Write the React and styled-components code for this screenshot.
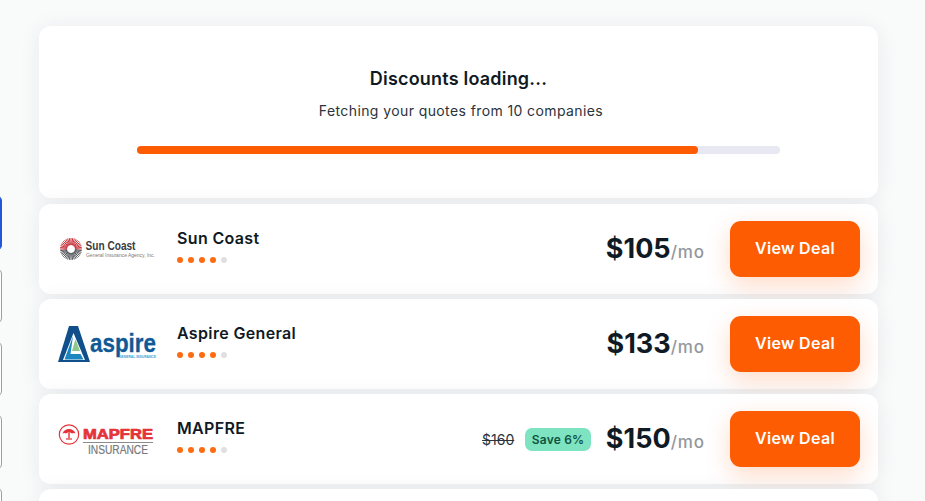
import React from "react";
import styled, { createGlobalStyle } from "styled-components";

const GlobalStyle = createGlobalStyle`
  html, body {
    margin: 0;
    height: 100%;
    overflow: hidden;
    background: #f9fafa;
    font-family: Inter, "Liberation Sans", sans-serif;
    color: #0f1a24;
  }
`;

const Page = styled.div`
  display: flex;
  height: 501px;
  overflow: hidden;
`;

const Rail = styled.div`
  width: 2px;
  flex: none;
  padding-top: 125px;
  display: flex;
  flex-direction: column;
  overflow: hidden;
`;

const RailRule = styled.div`
  width: 2px;
  height: 1px;
  background: #c9cbce;
  margin-bottom: 70px;
`;

const RailTile = styled.div`
  width: 40px;
  height: 56px;
  flex: none;
  box-sizing: border-box;
  margin-left: -38px;
  margin-bottom: 17px;
  border-radius: 6px;
  border: 1px solid ${(p) => (p.$active ? "#2456d6" : "#9b9ea2")};
  background: ${(p) => (p.$active ? "#2456d6" : "#fff")};
`;

const Main = styled.div`
  width: 839px;
  margin: 26px 0 0 37px;
  display: flex;
  flex-direction: column;
  gap: 5px;
`;

const LoadingCard = styled.section`
  height: 172px;
  flex: none;
  margin-bottom: 1px;
  box-sizing: border-box;
  padding-top: 42px;
  background: #fff;
  border-radius: 12px;
  box-shadow: 0 2px 22px rgba(30, 45, 70, 0.07);
  display: flex;
  flex-direction: column;
  align-items: center;
`;

const Title = styled.h2`
  margin: 0;
  font-size: 18px;
  line-height: 22px;
  font-weight: 600;
  letter-spacing: 0.2px;
`;

const Subtitle = styled.p`
  margin: 11px 0 0 5px;
  font-size: 14px;
  line-height: 20px;
  color: #2b333b;
  letter-spacing: 0.4px;
`;

const Track = styled.div`
  width: 643px;
  height: 8px;
  margin-top: 25px;
  border-radius: 4px;
  background: #e8e8f3;
`;

const Fill = styled.div`
  height: 100%;
  border-radius: 4px;
  background: #fd5c02;
`;

const Card = styled.article`
  height: 90px;
  flex: none;
  box-sizing: border-box;
  padding: 0 18px 0 19px;
  background: #fff;
  border-radius: 12px;
  box-shadow: 0 2px 22px rgba(30, 45, 70, 0.07);
  display: flex;
  align-items: center;
`;

const LogoSlot = styled.div`
  width: 119px;
  flex: none;
  display: flex;
  align-items: center;
`;

const Info = styled.div`
  display: flex;
  flex-direction: column;
  gap: 9px;
  margin-top: -8px;
`;

const Name = styled.div`
  font-size: 16px;
  line-height: 20px;
  font-weight: 600;
  letter-spacing: 0.35px;
`;

const Dots = styled.div`
  display: flex;
  gap: 5px;
`;

const Dot = styled.span`
  width: 6px;
  height: 6px;
  border-radius: 50%;
  background: ${(p) => (p.$on ? "#fd6c12" : "#dfe0e2")};
`;

const Pricing = styled.div`
  margin-left: auto;
  display: flex;
  align-items: center;
`;

const OldPrice = styled.s`
  font-size: 14px;
  color: #2b333b;
  margin-right: 11px;
`;

const SaveBadge = styled.span`
  height: 23px;
  padding: 0 6.5px;
  margin-right: 15px;
  display: flex;
  align-items: center;
  border-radius: 7px;
  background: #7de3c0;
  color: #125342;
  font-size: 12px;
  font-weight: 600;
  letter-spacing: 0.2px;
`;

const Price = styled.span`
  font-size: 27px;
  line-height: 32px;
  font-weight: 700;
`;

const Per = styled.span`
  font-size: 17px;
  font-weight: 500;
  color: #94979d;
  margin: 6px 0 0;
  letter-spacing: 0.9px;
`;

const DealButton = styled.button`
  width: 130px;
  height: 56px;
  flex: none;
  margin-left: 25px;
  padding: 0 0 2px;
  border: 0;
  border-radius: 11px;
  background: #fd5c02;
  color: #fff;
  font: 600 16px Inter, "Liberation Sans", sans-serif;
  letter-spacing: 0.3px;
  box-shadow: 0 8px 24px rgba(253, 92, 2, 0.22);
`;

const SunCoastLogo = () => {
  const spokes = [];
  for (let i = 0; i < 40; i++) {
    const a = (i / 40) * Math.PI * 2;
    const top = Math.sin(a) < 0.1;
    spokes.push(
      <line
        key={i}
        x1={13 + Math.cos(a) * 4}
        y1={13 + Math.sin(a) * 4}
        x2={13 + Math.cos(a) * 11}
        y2={13 + Math.sin(a) * 11}
        stroke={top ? "#c8323c" : "#55585c"}
        strokeWidth="1"
      />
    );
  }
  return (
    <svg width="100" height="26" viewBox="0 0 100 26">
      {spokes}
      <text x="27.500" y="14" fontFamily="Liberation Sans Narrow, Liberation Sans" fontSize="13" fontWeight="700" fill="#3a3c3f" textLength="50" lengthAdjust="spacingAndGlyphs">
        Sun Coast
      </text>
      <text x="28" y="20.500" fontFamily="Liberation Sans" fontSize="5" fill="#77797c" textLength="69" lengthAdjust="spacingAndGlyphs">
        General Insurance Agency, Inc.
      </text>
    </svg>
  );
};

const AspireLogo = () => (
  <svg width="108" height="37" viewBox="0 0 108 37">
    <path d="M11 0h9l12 36H0z" fill="#114f8a" />
    <path d="M15.500 7 27 34H5z" fill="#fff" />
    <path d="M15 10 6.500 33.500h19L22.500 28h-10z" fill="#1b86bf" />
    <path d="M17.500 13 22 25h-8z" fill="#8fc78a" />
    <text x="32" y="26" fontFamily="Liberation Sans" fontSize="26" fontWeight="700" fill="#0f5a96" stroke="#0f5a96" strokeWidth="0.300" textLength="66" lengthAdjust="spacingAndGlyphs">
      aspire
    </text>
    <text x="61" y="32" fontFamily="Liberation Sans" fontSize="3.500" fontWeight="700" fill="#3f9fd0" textLength="37" lengthAdjust="spacingAndGlyphs">
      GENERAL INSURANCE
    </text>
  </svg>
);

const MapfreLogo = () => (
  <svg width="100" height="31" viewBox="0 0 100 31">
    <circle cx="11" cy="10.500" r="9.700" fill="none" stroke="#e5333a" strokeWidth="1.200" />
    <path d="M4.500 9.500C5.500 6.500 8 5 11 5s5.500 1.500 6.500 4.500c-1.200-.8-2.600-.8-3.600 0-.8-.7-1.600-.9-2.900-.9s-2.100.2-2.900.9c-1-.8-2.400-.8-3.600 0z" fill="#e5333a" />
    <path d="M11 8.500v6" stroke="#e5333a" strokeWidth="1.400" />
    <path d="M8 15h6" stroke="#e5333a" strokeWidth="1.200" />
    <text x="25" y="15" fontFamily="Liberation Sans" fontSize="14" fontWeight="700" fill="#e5333a" stroke="#e5333a" strokeWidth="0.700" textLength="70" lengthAdjust="spacingAndGlyphs">
      MAPFRE
    </text>
    <rect x="25" y="18" width="70" height="1" fill="#8c8c8c" />
    <text x="30" y="29.500" fontFamily="Liberation Sans" fontSize="12" fontWeight="400" stroke="#77797c" strokeWidth="0.200" fill="#77797c" textLength="60" lengthAdjust="spacingAndGlyphs">
      INSURANCE
    </text>
  </svg>
);

const deals = [
  { name: "Sun Coast", Logo: SunCoastLogo, price: "$105" },
  { name: "Aspire General", Logo: AspireLogo, price: "$133" },
  { name: "MAPFRE", Logo: MapfreLogo, price: "$150", old: "$160", save: "Save 6%" },
];

export default function App() {
  return (
    <>
      <GlobalStyle />
      <Page>
        <Rail>
          <RailRule />
          <RailTile $active />
          <RailTile />
          <RailTile />
          <RailTile />
          <RailTile />
        </Rail>
        <Main>
          <LoadingCard>
            <Title>Discounts loading...</Title>
            <Subtitle>Fetching your quotes from 10 companies</Subtitle>
            <Track>
              <Fill style={{ width: `${(561 / 643) * 100}%` }} />
            </Track>
          </LoadingCard>
          {deals.map(({ name, Logo, price, old, save }) => (
            <Card key={name}>
              <LogoSlot>
                <Logo />
              </LogoSlot>
              <Info>
                <Name>{name}</Name>
                <Dots>
                  {[1, 2, 3, 4, 5].map((n) => (
                    <Dot key={n} $on={n < 5} />
                  ))}
                </Dots>
              </Info>
              <Pricing>
                {old && <OldPrice>{old}</OldPrice>}
                {save && <SaveBadge>{save}</SaveBadge>}
                <Price>{price}</Price>
                <Per>/mo</Per>
              </Pricing>
              <DealButton>View Deal</DealButton>
            </Card>
          ))}
          <Card />
        </Main>
      </Page>
    </>
  );
}
